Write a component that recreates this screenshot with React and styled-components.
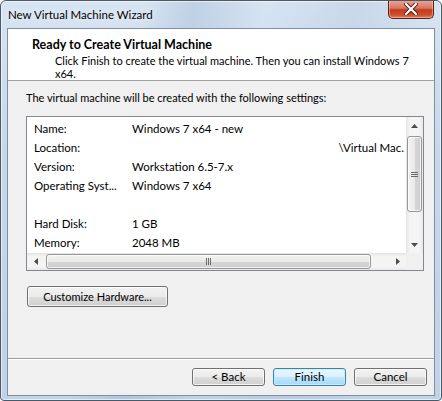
import React from "react";
import styled, { createGlobalStyle } from "styled-components";

const GlobalStyle = createGlobalStyle`
  html, body {
    margin: 0;
    padding: 0;
    background: #ffffff;
  }
  * {
    box-sizing: border-box;
  }
`;

const uiFont = `"Segoe UI", Lato, "Noto Sans", sans-serif`;

const Window = styled.div`
  width: 442px;
  height: 401px;
  border: 1px solid #4b5868;
  border-radius: 6px 6px 4px 4px;
  padding: 0 6px 4px 6px;
  display: flex;
  flex-direction: column;
  overflow: hidden;
  font-family: ${uiFont};
  font-size: 11px;
  color: #000;
  background:
    linear-gradient(100deg, transparent 0%, transparent 28%, rgba(150, 175, 205, 0.35) 38%, transparent 52%, rgba(170, 190, 215, 0.3) 70%, transparent 85%),
    linear-gradient(180deg, #d7e4f2 0%, #c6d7ea 40%, #bfd2e7 100%);
  box-shadow: inset 0 0 0 1px rgba(255, 255, 255, 0.6);
`;

const TitleBar = styled.div`
  height: 27px;
  flex: none;
  display: flex;
  align-items: center;
  padding-left: 1px;
`;

const TitleText = styled.span`
  font-size: 11.5px;
  color: #000;
  text-shadow: 0 0 6px rgba(255, 255, 255, 0.9);
`;

const CloseButton = styled.div`
  margin-left: auto;
  margin-right: 1px;
  align-self: flex-start;
  margin-top: -1px;
  width: 46px;
  height: 19px;
  border: 1px solid #5a2418;
  border-top: none;
  border-radius: 0 0 5px 5px;
  background: linear-gradient(180deg, #e9a899 0%, #d9765f 45%, #c3391d 55%, #cf5230 85%, #e0886a 100%);
  box-shadow: inset 0 0 0 1px rgba(255, 210, 200, 0.45);
  display: flex;
  align-items: center;
  justify-content: center;
`;

const Client = styled.div`
  flex: 1;
  display: flex;
  flex-direction: column;
  border: 1px solid #7f8fa3;
  background: #f0f0f0;
`;

const Header = styled.div`
  height: 52px;
  flex: none;
  background: #ffffff;
  padding: 8px 0 0 24px;
  border-bottom: 1px solid #a0a0a0;
`;

const HeaderTitle = styled.div`
  font-weight: bold;
  font-size: 12.5px;
  line-height: 15px;
`;

const HeaderSub = styled.div`
  margin: 2px 0 0 23px;
  line-height: 13px;
  white-space: nowrap;
`;

const Body = styled.div`
  flex: 1;
  padding: 9px 10px 0 18px;
  display: flex;
  flex-direction: column;
  align-items: flex-start;
`;

const Intro = styled.div`
  line-height: 15px;
  margin-bottom: 11px;
`;

const ListBox = styled.div`
  width: 398px;
  height: 155px;
  border: 1px solid #828790;
  background: #ffffff;
  display: grid;
  grid-template-columns: 1fr 17px;
  grid-template-rows: 1fr 17px;
`;

const ListContent = styled.div`
  overflow: hidden;
  padding-top: 2px;
  font-size: 11.5px;
`;

const Row = styled.div`
  height: 19px;
  display: flex;
  align-items: center;
  padding-left: 7px;
  white-space: nowrap;
`;

const Label = styled.span`
  width: 98px;
  flex: none;
  overflow: hidden;
`;

const Value = styled.span`
  flex: 1;
  text-align: ${(p) => (p.$right ? "right" : "left")};
  padding-right: ${(p) => (p.$right ? "2px" : "0")};
`;

const VScroll = styled.div`
  display: flex;
  flex-direction: column;
  background: linear-gradient(90deg, #e3e3e3 0%, #f4f4f4 20%, #f4f4f4 80%, #e8e8e8 100%);
`;

const HScroll = styled.div`
  display: flex;
  background: linear-gradient(180deg, #e3e3e3 0%, #f4f4f4 20%, #f4f4f4 80%, #e8e8e8 100%);
`;

const ArrowCell = styled.div`
  width: 17px;
  height: 17px;
  flex: none;
  display: flex;
  align-items: center;
  justify-content: center;
`;

const Track = styled.div`
  flex: 1;
  display: flex;
  flex-direction: ${(p) => (p.$vertical ? "column" : "row")};
`;

const Thumb = styled.div`
  flex: none;
  border: 1px solid #979797;
  border-radius: 3px;
  display: flex;
  align-items: center;
  justify-content: center;
  background: ${(p) =>
    p.$vertical
      ? "linear-gradient(90deg, #f4f4f4 0%, #e9e9e9 50%, #d6d6d6 51%, #cfcfcf 100%)"
      : "linear-gradient(180deg, #f4f4f4 0%, #e9e9e9 50%, #d6d6d6 51%, #cfcfcf 100%)"};
  box-shadow: inset 0 0 0 1px rgba(255, 255, 255, 0.7);
`;

const Corner = styled.div`
  background: #f0f0f0;
`;

const Button = styled.button`
  font-family: ${uiFont};
  font-size: 11.5px;
  color: #000;
  width: ${(p) => p.$width || 73}px;
  height: ${(p) => p.$height || 18}px;
  padding: 0;
  border: 1px solid ${(p) => (p.$default ? "#3c7fb1" : "#707070")};
  border-radius: 3px;
  background: ${(p) =>
    p.$default
      ? "linear-gradient(180deg, #eaf6fd 0%, #d9f0fc 50%, #bee6fd 51%, #a7d9f5 100%)"
      : "linear-gradient(180deg, #f2f2f2 0%, #ebebeb 50%, #dddddd 51%, #cfcfcf 100%)"};
  box-shadow: inset 0 0 0 1px ${(p) => (p.$default ? "rgba(200, 240, 255, 0.9)" : "rgba(255, 255, 255, 0.75)")};
  display: flex;
  align-items: center;
  justify-content: center;
  line-height: 1;
`;

const CustomizeButton = styled(Button)`
  margin-top: 15px;
  margin-left: 1px;
  font-size: 11px;
`;

const Footer = styled.div`
  flex: none;
  border-top: 1px solid #a0a0a0;
  box-shadow: inset 0 1px 0 #ffffff;
  padding: 9px 7px 9px 0;
  display: flex;
  justify-content: flex-end;
  gap: 8px;
`;

const Arrow = ({ dir }) => {
  const pts = {
    up: "1,5 4.5,1 8,5",
    down: "1,1 4.5,5 8,1",
    left: "5,1 1,4.5 5,8",
    right: "1,1 5,4.5 1,8",
  }[dir];
  const vertical = dir === "up" || dir === "down";
  return (
    <svg width={vertical ? 9 : 6} height={vertical ? 6 : 9} viewBox={vertical ? "0 0 9 6" : "0 0 6 9"}>
      <polygon points={pts} fill="#4d4d4d" />
    </svg>
  );
};

const Grip = ({ vertical }) => (
  <svg width={7} height={7} viewBox="0 0 7 7">
    {[1, 3, 5].map((v) =>
      vertical ? (
        <line key={v} x1="0" y1={v + 0.5} x2="7" y2={v + 0.5} stroke="#6b6b6b" strokeWidth="1" />
      ) : (
        <line key={v} x1={v + 0.5} y1="0" x2={v + 0.5} y2="7" stroke="#6b6b6b" strokeWidth="1" />
      )
    )}
  </svg>
);

const settings = [
  { label: "Name:", value: "Windows 7 x64 - new" },
  { label: "Location:", value: "\\Virtual Mac.", right: true },
  { label: "Version:", value: "Workstation 6.5-7.x" },
  { label: "Operating Syst...", value: "Windows 7 x64" },
  { label: "", value: "" },
  { label: "Hard Disk:", value: "1 GB" },
  { label: "Memory:", value: "2048 MB" },
];

export default function App() {
  return (
    <>
      <GlobalStyle />
      <Window>
        <TitleBar>
          <TitleText>New Virtual Machine Wizard</TitleText>
          <CloseButton>
            <svg width="14" height="12" viewBox="0 0 14 12">
              <path d="M2 1 L12 11 M12 1 L2 11" stroke="#4a1a10" strokeWidth="4" strokeLinecap="square" />
              <path d="M2 1 L12 11 M12 1 L2 11" stroke="#ffffff" strokeWidth="2.2" strokeLinecap="square" />
            </svg>
          </CloseButton>
        </TitleBar>
        <Client>
          <Header>
            <HeaderTitle>Ready to Create Virtual Machine</HeaderTitle>
            <HeaderSub>
              Click Finish to create the virtual machine. Then you can install Windows 7
              <br />
              x64.
            </HeaderSub>
          </Header>
          <Body>
            <Intro>The virtual machine will be created with the following settings:</Intro>
            <ListBox>
              <ListContent>
                {settings.map((s, i) => (
                  <Row key={i}>
                    <Label>{s.label}</Label>
                    <Value $right={s.right}>{s.value}</Value>
                  </Row>
                ))}
              </ListContent>
              <VScroll>
                <ArrowCell>
                  <Arrow dir="up" />
                </ArrowCell>
                <Track $vertical>
                  <Thumb $vertical style={{ marginTop: 2, height: 76, width: 15, marginLeft: 1 }}>
                    <Grip vertical />
                  </Thumb>
                </Track>
                <ArrowCell>
                  <Arrow dir="down" />
                </ArrowCell>
              </VScroll>
              <HScroll>
                <ArrowCell>
                  <Arrow dir="left" />
                </ArrowCell>
                <Track>
                  <Thumb style={{ marginLeft: 2, width: 325, height: 15, marginTop: 1 }}>
                    <Grip />
                  </Thumb>
                </Track>
                <ArrowCell>
                  <Arrow dir="right" />
                </ArrowCell>
              </HScroll>
              <Corner />
            </ListBox>
            <CustomizeButton $width={141} $height={21}>
              Customize Hardware...
            </CustomizeButton>
          </Body>
          <Footer>
            <Button>&lt; Back</Button>
            <Button $default>Finish</Button>
            <Button>Cancel</Button>
          </Footer>
        </Client>
      </Window>
    </>
  );
}
